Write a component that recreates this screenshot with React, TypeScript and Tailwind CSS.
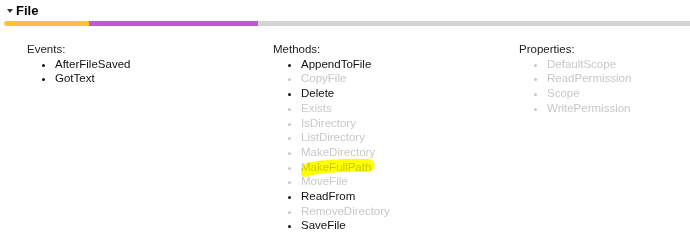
const events = [{ name: 'AfterFileSaved', on: true }, { name: 'GotText', on: true }];

const methods = [
  { name: 'AppendToFile', on: true },
  { name: 'CopyFile', on: false },
  { name: 'Delete', on: true },
  { name: 'Exists', on: false },
  { name: 'IsDirectory', on: false },
  { name: 'ListDirectory', on: false },
  { name: 'MakeDirectory', on: false },
  { name: 'MakeFullPath', on: false, marked: true },
  { name: 'MoveFile', on: false },
  { name: 'ReadFrom', on: true },
  { name: 'RemoveDirectory', on: false },
  { name: 'SaveFile', on: true },
];

const properties = [
  { name: 'DefaultScope', on: false },
  { name: 'ReadPermission', on: false },
  { name: 'Scope', on: false },
  { name: 'WritePermission', on: false },
];

type Item = { name: string; on: boolean; marked?: boolean };

function BlockList({ title, items }: { title: string; items: Item[] }) {
  return (
    <div>
      <div className="text-[#222]">{title}</div>
      <ul className="list-disc pl-[28px]">
        {items.map((item) => (
          <li
            key={item.name}
            className={item.on ? 'text-[#111] marker:text-[#111]' : 'text-[#c8c8c8] marker:text-[#c8c8c8]'}
          >
            <span className="relative">
              {item.name}
              {/* hand-drawn highlighter stroke */}
              {item.marked && (
                <svg
                  className="absolute left-0 top-[-5px] mix-blend-multiply pointer-events-none"
                  width="76"
                  height="24"
                  viewBox="0 0 76 24"
                >
                  <path
                    d="M8 13 C 25 10, 50 9, 67 9.5"
                    stroke="#ffff00"
                    strokeWidth="13"
                    strokeLinecap="round"
                    fill="none"
                  />
                  <path d="M4 16 L 12 12" stroke="#ffff00" strokeWidth="10" strokeLinecap="round" />
                </svg>
              )}
            </span>
          </li>
        ))}
      </ul>
    </div>
  );
}

export default function App() {
  return (
    <div className="w-[690px] h-[245px] bg-white overflow-hidden font-['Liberation_Sans',Arial,sans-serif] text-[11.5px] leading-[14.7px]">
      {/* Header */}
      <div className="flex items-center h-[20px] pl-[7px] pt-[2px]">
        <svg width="6" height="4" viewBox="0 0 6 4" className="mr-[3px] mt-[-1px]">
          <path d="M0 0 L6 0 L3 4 Z" fill="#333" />
        </svg>
        <span className="font-bold text-[13px] text-black">File</span>
      </div>

      {/* Progress bar */}
      <div className="flex h-[5px] mt-[1px] ml-[4px]">
        <div className="w-[85px] bg-[#fcc13a] rounded-l-full" />
        <div className="w-[169px] bg-[#b85fcc]" />
        <div className="flex-1 bg-[#d4d4d4]" />
      </div>

      {/* Blocks */}
      <div className="grid grid-cols-[246px_246px_1fr] pl-[27px] pt-[16px]">
        <BlockList title="Events:" items={events} />
        <BlockList title="Methods:" items={methods} />
        <BlockList title="Properties:" items={properties} />
      </div>
    </div>
  );
}
